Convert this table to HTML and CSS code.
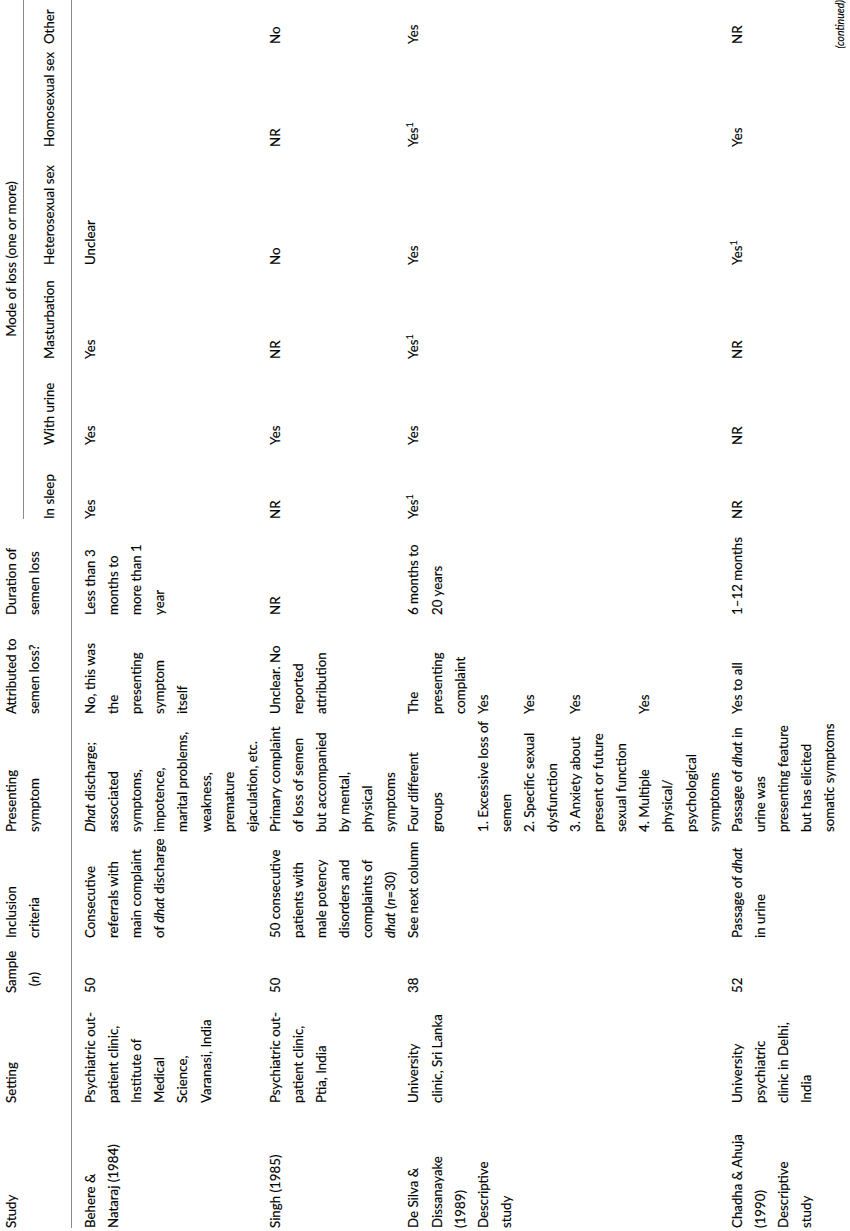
FILE: index.html
```html
<!DOCTYPE html>
<html lang="en">
<head>
<meta charset="utf-8">
<title>Studies of semen loss</title>
<link rel="stylesheet" href="styles.css">
</head>
<body>
<div class="frame">
<div class="page">
  <table class="tbl">
    <colgroup>
      <col class="c-study">
      <col class="c-setting">
      <col class="c-sample">
      <col class="c-incl">
      <col class="c-pres">
      <col class="c-attr">
      <col class="c-dur">
      <col class="c-sleep">
      <col class="c-urine">
      <col class="c-mast">
      <col class="c-hetero">
      <col class="c-homo">
      <col class="c-other">
    </colgroup>
    <thead>
      <tr class="h1">
        <th rowspan="2">Study</th>
        <th rowspan="2">Setting</th>
        <th rowspan="2">Sample<br>&nbsp;&nbsp;(<i>n</i>)</th>
        <th rowspan="2">Inclusion<br>criteria</th>
        <th rowspan="2">Presenting<br>symptom</th>
        <th rowspan="2">Attributed to<br>semen loss?</th>
        <th rowspan="2">Duration of<br>semen loss</th>
        <th colspan="6" class="group">Mode of loss (one or more)</th>
      </tr>
      <tr class="h2">
        <th class="sub">In sleep</th>
        <th class="sub">With urine</th>
        <th class="sub">Masturbation</th>
        <th class="sub">Heterosexual sex</th>
        <th class="sub">Homosexual sex</th>
        <th class="sub">Other</th>
      </tr>
    </thead>
    <tbody>
      <tr class="first">
        <td>Behere &amp;<br>Nataraj (1984)</td>
        <td>Psychiatric out-<br>patient clinic,<br>Institute of<br>Medical<br>Science,<br>Varanasi, India</td>
        <td>50</td>
        <td>Consecutive<br>referrals with<br>main complaint<br>of <i>dhat</i> discharge</td>
        <td><i>Dhat</i> discharge;<br>associated<br>symptoms,<br>impotence,<br>marital problems,<br>weakness,<br>premature<br>ejaculation, etc.</td>
        <td>No, this was<br>the<br>presenting<br>symptom<br>itself</td>
        <td>Less than 3<br>months to<br>more than 1<br>year</td>
        <td>Yes</td>
        <td>Yes</td>
        <td>Yes</td>
        <td>Unclear</td>
        <td></td>
        <td></td>
      </tr>
      <tr>
        <td>Singh (1985)</td>
        <td>Psychiatric out-<br>patient clinic,<br>Ptia, India</td>
        <td>50</td>
        <td>50 consecutive<br>patients with<br>male potency<br>disorders and<br>complaints of<br><i>dhat</i> (<i>n</i>=30)</td>
        <td>Primary complaint<br>of loss of semen<br>but accompanied<br>by mental,<br>physical<br>symptoms</td>
        <td>Unclear. No<br>reported<br>attribution</td>
        <td>NR</td>
        <td>NR</td>
        <td>Yes</td>
        <td>NR</td>
        <td>No</td>
        <td>NR</td>
        <td>No</td>
      </tr>
      <tr>
        <td rowspan="5">De Silva &amp;<br>Dissanayake<br>(1989)<br>Descriptive<br>study</td>
        <td rowspan="5">University<br>clinic, Sri Lanka</td>
        <td rowspan="5">38</td>
        <td rowspan="5">See next column</td>
        <td>Four different<br>groups</td>
        <td>The<br>presenting<br>complaint</td>
        <td rowspan="5">6 months to<br>20 years</td>
        <td rowspan="5">Yes<sup>1</sup></td>
        <td rowspan="5">Yes</td>
        <td rowspan="5">Yes<sup>1</sup></td>
        <td rowspan="5">Yes</td>
        <td rowspan="5">Yes<sup>1</sup></td>
        <td rowspan="5">Yes</td>
      </tr>
      <tr>
        <td>1. Excessive loss of<br>semen</td>
        <td>Yes</td>
      </tr>
      <tr>
        <td>2. Specific sexual<br>dysfunction</td>
        <td>Yes</td>
      </tr>
      <tr>
        <td>3. Anxiety about<br>present or future<br>sexual function</td>
        <td>Yes</td>
      </tr>
      <tr>
        <td>4. Multiple<br>physical/<br>psychological<br>symptoms</td>
        <td>Yes</td>
      </tr>
      <tr>
        <td>Chadha &amp; Ahuja<br>(1990)<br>Descriptive<br>study</td>
        <td>University<br>psychiatric<br>clinic in Delhi,<br>India</td>
        <td>52</td>
        <td>Passage of <i>dhat</i><br>in urine</td>
        <td>Passage of <i>dhat</i> in<br>urine was<br>presenting feature<br>but has elicited<br>somatic symptoms</td>
        <td>Yes to all</td>
        <td>1–12 months</td>
        <td>NR</td>
        <td>NR</td>
        <td>NR</td>
        <td>Yes<sup>1</sup></td>
        <td>Yes</td>
        <td>NR</td>
      </tr>
    </tbody>
  </table>
  <div class="cont">(continued)</div>
</div>
</div>
</body>
</html>
```
FILE: styles.css
```css
html, body {
  margin: 0;
  padding: 0;
  background: #ffffff;
}

.frame {
  width: 850px;
  height: 1231px;
  overflow: hidden;
}

.page {
  width: 1231px;
  height: 850px;
  transform-origin: 0 0;
  transform: translateY(1231px) rotate(-90deg);
  font-family: Lato, "Open Sans", sans-serif;
  font-size: 13.3px;
  color: #000000;
  -webkit-text-stroke: 0.15px #000000;
  background: #ffffff;
}

.tbl {
  table-layout: fixed;
  border-collapse: collapse;
  width: 1229px;
  margin: -1px 0 0 2px;
}

.c-study  { width: 125px; }
.c-setting{ width: 110px; }
.c-sample { width: 55px; }
.c-incl   { width: 106px; }
.c-pres   { width: 118px; }
.c-attr   { width: 99px; }
.c-dur    { width: 96px; }
.c-sleep  { width: 74px; }
.c-urine  { width: 86px; }
.c-mast   { width: 94px; }
.c-hetero { width: 118px; }
.c-homo   { width: 103px; }
.c-other  { width: 45px; }

.tbl th,
.tbl td {
  padding: 0;
  text-align: left;
  vertical-align: top;
  font-weight: 400;
  line-height: 23.1px;
  white-space: nowrap;
}

.h1 { height: 23px; }
.h2 { height: 48px; }

.tbl thead th {
  border-bottom: 1px solid #8a8a8a;
}

.tbl th.group {
  text-align: center;
  border-bottom: 1px solid #8a8a8a;
}

.tbl th.sub {
  vertical-align: bottom;
  padding-bottom: 10px;
}

.tbl tr.first td {
  padding-top: 7px;
}

.tbl sup {
  font-size: 9px;
  line-height: 0;
  vertical-align: 5px;
}

.cont {
  text-align: right;
  font-style: italic;
  font-size: 10.5px;
  line-height: 12px;
  margin-top: -7px;
  padding-right: 1px;
}
```
